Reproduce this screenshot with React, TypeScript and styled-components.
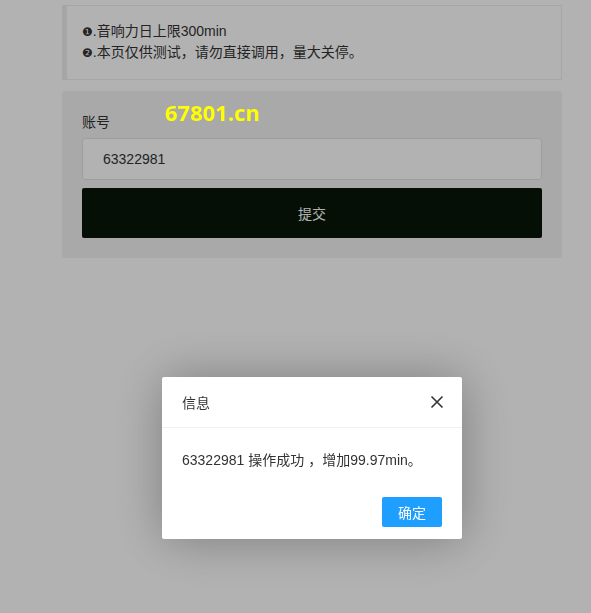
import React from "react";
import styled, { createGlobalStyle } from "styled-components";

const GlobalStyle = createGlobalStyle`
  html, body {
    margin: 0;
    padding: 0;
    background: #fff;
    font-family: "Liberation Sans", "Noto Sans CJK SC", sans-serif;
    font-size: 14px;
    color: #333;
  }
`;

const Page = styled.div`
  width: 500px;
  padding: 5px 0 0 62px;
  display: flex;
  flex-direction: column;
  gap: 11px;
  position: relative;
`;

const Quote = styled.div`
  border: 1px solid #eee;
  border-left-width: 5px;
  padding: 15px 15px 16px;
  line-height: 21px;
`;

const Mark = styled.span`
  font-family: "DejaVu Sans", sans-serif;
  font-size: 12px;
  line-height: 1;
`;

const Card = styled.div`
  background: #f2f2f2;
  border-radius: 3px;
  padding: 20px 20px 20px;
  display: flex;
  flex-direction: column;
`;

const Label = styled.label`
  line-height: 22px;
  margin-bottom: 5px;
`;

const Input = styled.input`
  box-sizing: border-box;
  height: 42px;
  border: 1px solid #e2e2e2;
  border-radius: 3px;
  background: #fff;
  padding: 0 20px;
  font: inherit;
  color: #333;
  outline: none;
`;

const Submit = styled.button`
  margin-top: 8px;
  height: 50px;
  border: none;
  border-radius: 2px;
  background: #0a160a;
  color: #fff;
  font: inherit;
  font-size: 14px;
`;

const Watermark = styled.div`
  position: absolute;
  left: 165px;
  top: 97px;
  z-index: 30;
  color: #ffff00;
  font-weight: bold;
  font-size: 22px;
  font-family: "Open Sans", "Liberation Sans", sans-serif;
`;

const Shade = styled.div`
  position: fixed;
  inset: 0;
  background: rgba(0, 0, 0, 0.3);
  z-index: 10;
`;

const Dialog = styled.div`
  position: fixed;
  left: 162px;
  top: 377px;
  width: 300px;
  background: #fff;
  border-radius: 2px;
  box-shadow: 1px 1px 50px rgba(0, 0, 0, 0.3);
  z-index: 20;
  display: flex;
  flex-direction: column;
`;

const Title = styled.div`
  height: 50px;
  display: flex;
  align-items: center;
  justify-content: space-between;
  padding: 0 18px 0 20px;
  border-bottom: 1px solid #f0f0f0;
  color: #333;
`;

const Close = styled.span`
  display: flex;
  cursor: pointer;
`;

const Content = styled.div`
  padding: 20px;
  line-height: 24px;
  color: #333;
`;

const Comma = styled.span`
  padding-left: 4px;
`;

const Actions = styled.div`
  display: flex;
  justify-content: flex-end;
  padding: 5px 20px 12px;
`;

const Confirm = styled.button`
  height: 30px;
  width: 60px;
  border: none;
  border-radius: 2px;
  background: #1e9fff;
  color: #fff;
  font: inherit;
  font-size: 14px;
`;

export default function App() {
  return (
    <>
      <GlobalStyle />
      <Page>
        <Quote>
          <div>
            <Mark>❶</Mark>.音响力日上限300min
          </div>
          <div>
            <Mark>❷</Mark>.本页仅供测试，请勿直接调用，量大关停。
          </div>
        </Quote>
        <Card>
          <Label>账号</Label>
          <Input defaultValue="63322981" />
          <Submit>提交</Submit>
        </Card>
        <Watermark>67801.cn</Watermark>
      </Page>
      <Shade />
      <Dialog>
        <Title>
          <span>信息</span>
          <Close>
            <svg width="14" height="14" viewBox="0 0 14 14">
              <path
                d="M1.5 1.5 L12.5 12.5 M12.5 1.5 L1.5 12.5"
                stroke="#333"
                strokeWidth="1.6"
                fill="none"
              />
            </svg>
          </Close>
        </Title>
        <Content>
          63322981 操作成功<Comma>，</Comma>增加99.97min。
        </Content>
        <Actions>
          <Confirm>确定</Confirm>
        </Actions>
      </Dialog>
    </>
  );
}
